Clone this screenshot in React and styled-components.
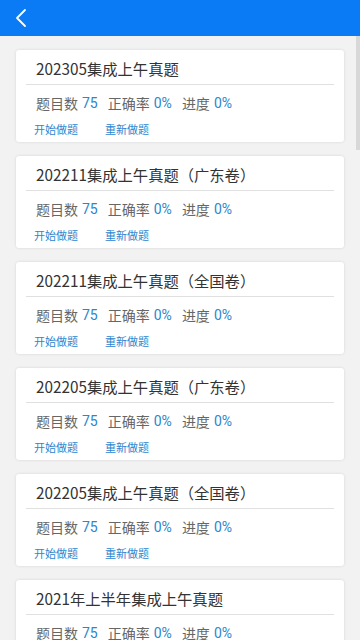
import React from "react";
import styled, { createGlobalStyle } from "styled-components";

const GlobalStyle = createGlobalStyle`
  html, body {
    margin: 0;
    padding: 0;
    background: #f2f2f2;
    font-family: "Noto Sans CJK SC", "Noto Sans", sans-serif;
  }
`;

const papers = [
  "202305集成上午真题",
  "202211集成上午真题（广东卷）",
  "202211集成上午真题（全国卷）",
  "202205集成上午真题（广东卷）",
  "202205集成上午真题（全国卷）",
  "2021年上半年集成上午真题",
];

export default function App() {
  return (
    <Page>
      <GlobalStyle />
      <Header>
        <Back>
          <svg width="14" height="20" viewBox="0 0 14 20">
            <path d="M11 2 L3 10 L11 18" fill="none" stroke="#fff" strokeWidth="1.8" strokeLinecap="round" strokeLinejoin="round" />
          </svg>
        </Back>
      </Header>
      <Body>
        <List>
          {papers.map((title) => (
            <Card key={title}>
              <Title>{title}</Title>
              <Divider />
              <Stats>
                <Label>题目数</Label>
                <Value>75</Value>
                <Label>正确率</Label>
                <Value>0%</Value>
                <Label>进度</Label>
                <Value>0%</Value>
              </Stats>
              <Actions>
                <Link>开始做题</Link>
                <Link>重新做题</Link>
              </Actions>
            </Card>
          ))}
        </List>
        <Scrollbar />
      </Body>
    </Page>
  );
}

const Page = styled.div`
  width: 360px;
  height: 640px;
  overflow: hidden;
  background: #f2f2f2;
`;
const Header = styled.div`
  height: 36px;
  background: #0a7bf5;
  display: flex;
  align-items: center;
  padding-left: 14px;
`;
const Back = styled.div`
  display: flex;
  align-items: center;
`;
const Body = styled.div`
  position: relative;
`;
const List = styled.div`
  display: flex;
  flex-direction: column;
  gap: 14px;
  padding: 14px 16px 0;
`;
const Scrollbar = styled.div`
  position: absolute;
  right: 0;
  top: 0;
  width: 4px;
  height: 114px;
  background: #d8d8d8;
`;
const Card = styled.div`
  background: #fff;
  border-radius: 3px;
  box-shadow: 0 0 3px rgba(0, 0, 0, 0.12);
  padding: 0 10px;
  height: 92px;
  box-sizing: border-box;
`;
const Title = styled.div`
  height: 34px;
  line-height: 36px;
  padding-left: 10px;
  font-size: 15.3px;
  color: #333;
  white-space: nowrap;
`;
const Divider = styled.div`
  height: 1px;
  background: #e0e0e0;
`;
const Stats = styled.div`
  display: flex;
  align-items: center;
  height: 36px;
  padding-left: 10px;
  font-size: 14px;
`;
const Label = styled.span`
  color: #666;
  margin-right: 4px;
`;
const Value = styled.span`
  color: #2b86cf;
  font-family: "Roboto", sans-serif;
  margin-right: 10px;
`;
const Actions = styled.div`
  display: flex;
  gap: 27px;
  padding-left: 8px;
  font-size: 11px;
  line-height: 16px;
`;
const Link = styled.span`
  color: #2b86cf;
`;
